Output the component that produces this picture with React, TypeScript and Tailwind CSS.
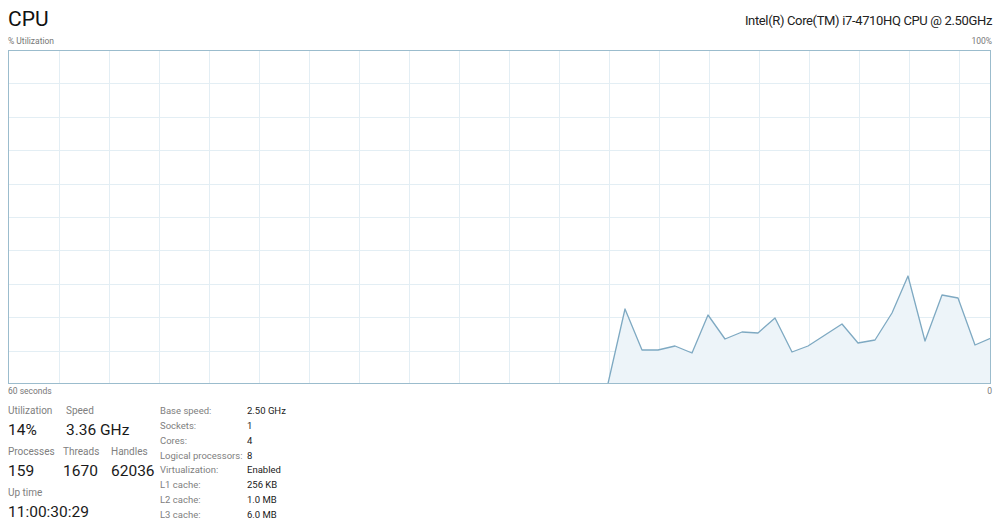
import React from "react";

const pts: [number, number][] = [
  [600, 333.5], [617, 259], [634, 300], [650, 300], [667, 296], [684, 303], [700, 265],
  [717, 289], [734, 282], [750, 283], [767, 268], [784, 302], [800, 296], [817, 285],
  [834, 274], [850, 293], [867, 290], [884, 263], [900, 226], [917, 291], [934, 245],
  [950, 248], [967, 295], [983, 288],
];

function Chart() {
  const W = 983;
  const H = 334;
  const vx: number[] = [];
  for (let x = 51; x < W; x += 50) vx.push(x);
  const hy: number[] = [];
  for (let k = 1; k < 10; k++) hy.push(Math.round(k * 33.4) + 0.5);
  const line = pts.map((p) => `${p[0]},${p[1]}`).join(" ");
  const area = `${pts[0][0]},${H} ${line} ${W},${H}`;
  return (
    <svg width={W} height={H} viewBox={`0 0 ${W} ${H}`} className="block">
      <rect x={0.5} y={0.5} width={W - 1} height={H - 1} fill="#ffffff" stroke="#9bbccd" />
      {vx.map((x) => (
        <line key={"v" + x} x1={x + 0.5} x2={x + 0.5} y1={1} y2={H - 1} stroke="#e3eef4" />
      ))}
      {hy.map((y) => (
        <line key={"h" + y} x1={1} x2={W - 1} y1={y} y2={y} stroke="#e3eef4" />
      ))}
      <polygon points={area} fill="#edf4f9" />
      <polyline points={line} fill="none" stroke="#7ea9c2" strokeWidth={1.3} strokeLinejoin="round" />
      <rect x={0.5} y={0.5} width={W - 1} height={H - 1} fill="none" stroke="#9bbccd" />
    </svg>
  );
}

function Stat({ label, value, w }: { label: string; value: string; w: string }) {
  return (
    <div className={`flex flex-col ${w}`}>
      <div className="text-[10px] leading-[15px] text-[#808080]">{label}</div>
      <div className="text-[15.5px] leading-[24px] text-[#1a1a1a]">{value}</div>
    </div>
  );
}

const specs: [string, string][] = [
  ["Base speed:", "2.50 GHz"],
  ["Sockets:", "1"],
  ["Cores:", "4"],
  ["Logical processors:", "8"],
  ["Virtualization:", "Enabled"],
  ["L1 cache:", "256 KB"],
  ["L2 cache:", "1.0 MB"],
  ["L3 cache:", "6.0 MB"],
];

export default function App() {
  return (
    <div
      className="w-[1000px] h-[521px] bg-white overflow-hidden px-2 text-[#1a1a1a]"
      style={{ fontFamily: 'Roboto, "Noto Sans", sans-serif' }}
    >
      <div className="flex justify-between items-end h-[33px]">
        <div className="text-[21px] leading-[28px] text-[#111]">CPU</div>
        <div className="text-[13px] leading-[20px] tracking-[-0.35px] text-[#222] mb-[2px]">
          Intel(R) Core(TM) i7-4710HQ CPU @ 2.50GHz
        </div>
      </div>
      <div className="flex justify-between h-[17px] items-center text-[8.5px] text-[#777]">
        <span>% Utilization</span>
        <span>100%</span>
      </div>
      <Chart />
      <div className="flex justify-between h-[15px] items-center text-[8.5px] text-[#777]">
        <span>60 seconds</span>
        <span>0</span>
      </div>
      <div className="flex mt-[4px]">
        <div className="flex flex-col w-[152px] gap-[2px]">
          <div className="flex">
            <Stat label="Utilization" value="14%" w="w-[58px]" />
            <Stat label="Speed" value="3.36 GHz" w="w-[80px]" />
          </div>
          <div className="flex">
            <Stat label="Processes" value="159" w="w-[55px]" />
            <Stat label="Threads" value="1670" w="w-[48px]" />
            <Stat label="Handles" value="62036" w="w-[48px]" />
          </div>
          <div className="flex">
            <Stat label="Up time" value="11:00:30:29" w="w-[100px]" />
          </div>
        </div>
        <div className="flex flex-col mt-[1px]">
          {specs.map(([k, v]) => (
            <div key={k} className="flex h-[14.8px] items-center text-[9.5px]">
              <span className="w-[87px] text-[#808080]">{k}</span>
              <span className="text-[#1a1a1a]">{v}</span>
            </div>
          ))}
        </div>
      </div>
    </div>
  );
}
